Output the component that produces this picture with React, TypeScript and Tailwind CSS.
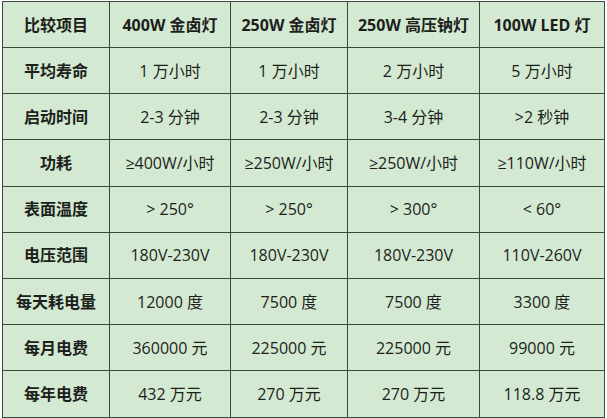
const header = ["比较项目", "400W 金卤灯", "250W 金卤灯", "250W 高压钠灯", "100W LED 灯"];

const rows: string[][] = [
  ["平均寿命", "1 万小时", "1 万小时", "2 万小时", "5 万小时"],
  ["启动时间", "2-3 分钟", "2-3 分钟", "3-4 分钟", ">2 秒钟"],
  ["功耗", "≥400W/小时", "≥250W/小时", "≥250W/小时", "≥110W/小时"],
  ["表面温度", "> 250°", "> 250°", "> 300°", "< 60°"],
  ["电压范围", "180V-230V", "180V-230V", "180V-230V", "110V-260V"],
  ["每天耗电量", "12000 度", "7500 度", "7500 度", "3300 度"],
  ["每月电费", "360000 元", "225000 元", "225000 元", "99000 元"],
  ["每年电费", "432 万元", "270 万元", "270 万元", "118.8 万元"],
];

const widths = ["w-[107px]", "w-[121px]", "w-[117px]", "w-[132px]", "w-[125px]"];

export default function App() {
  return (
    <div className="w-[607px] h-[418px] bg-white pl-[2px] pt-[1px] font-['Open_Sans','Noto_Sans_CJK_SC',sans-serif] text-[16px] text-[#1c1f1c]">
      <table className="border-collapse bg-[#d4e9d1]">
        <thead>
          <tr className="h-[46px]">
            {header.map((h, i) => (
              <th
                key={h}
                className={`${widths[i]} border-[1.5px] border-[#3c4a3e] text-center font-bold`}
              >
                {h}
              </th>
            ))}
          </tr>
        </thead>
        <tbody>
          {rows.map((r) => (
            <tr key={r[0]} className="h-[46.2px]">
              {r.map((c, i) => (
                <td
                  key={i}
                  className={`border-[1.5px] border-[#3c4a3e] text-center ${i === 0 ? "font-bold" : ""}`}
                >
                  {c}
                </td>
              ))}
            </tr>
          ))}
        </tbody>
      </table>
    </div>
  );
}
